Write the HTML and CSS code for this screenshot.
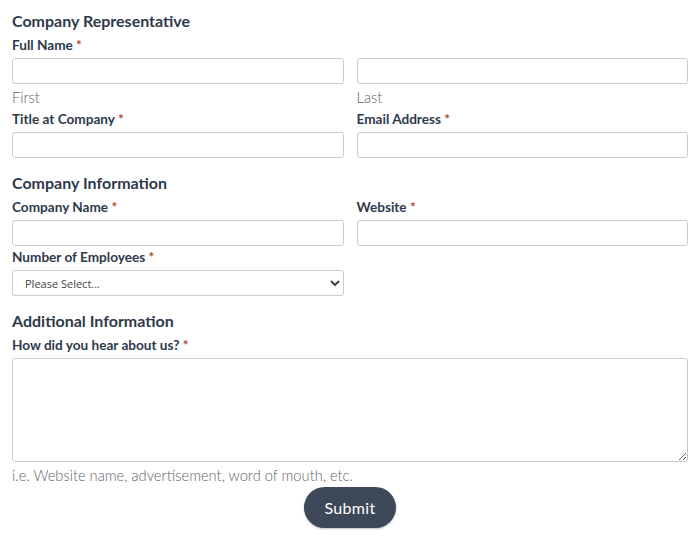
FILE: index.html
```html
<!DOCTYPE html>
<html lang="en">
<head>
  <meta charset="UTF-8">
  <meta name="viewport" content="width=device-width, initial-scale=1.0">
  <title>Contact Form</title>
  <link rel="stylesheet" href="styles.css">
</head>
<body>

  <form class="form">
    <h2>Company Representative</h2>
    <div class="field">
      <label>Full Name <span class="req">*</span></label>
      <div class="row">
        <div class="cell">
          <input type="text">
          <p class="hint">First</p>
        </div>
        <div class="cell">
          <input type="text">
          <p class="hint">Last</p>
        </div>
      </div>
    </div>
    <div class="row">
      <div class="field">
        <label>Title at Company <span class="req">*</span></label>
        <input type="text">
      </div>
      <div class="field">
        <label>Email Address <span class="req">*</span></label>
        <input type="email">
      </div>
    </div>

    <h2>Company Information</h2>
    <div class="row">
      <div class="field">
        <label>Company Name <span class="req">*</span></label>
        <input type="text">
      </div>
      <div class="field">
        <label>Website <span class="req">*</span></label>
        <input type="text">
      </div>
    </div>
    <div class="row">
      <div class="field">
        <label>Number of Employees <span class="req">*</span></label>
        <select>
          <option>Please Select...</option>
          <option>1-10</option>
          <option>11-50</option>
          <option>51-200</option>
          <option>200+</option>
        </select>
      </div>
    </div>

    <h2>Additional Information</h2>
    <div class="field">
      <label>How did you hear about us? <span class="req">*</span></label>
      <textarea></textarea>
      <p class="hint">i.e. Website name, advertisement, word of mouth, etc.</p>
    </div>

    <div class="actions">
      <button type="submit">Submit</button>
    </div>
  </form>

</body>
</html>
```

FILE: styles.css
```css
* {
  margin: 0;
  padding: 0;
  box-sizing: border-box;
}

body {
  font-family: Lato, "Open Sans", sans-serif;
  background-color: #ffffff;
  color: #2e3a4b;
  padding: 11px 12px;
}

h2 {
  font-size: 16px;
  font-weight: 700;
  line-height: 20px;
  margin-bottom: 5px;
}

.form h2:not(:first-child) {
  margin-top: 15px;
}

.row {
  display: grid;
  grid-template-columns: 1fr 1fr;
  column-gap: 13px;
}

.row + .row {
  margin-top: 2px;
}

.field + .row {
  margin-top: 3px;
}

label {
  display: block;
  font-size: 13.6px;
  font-weight: 700;
  line-height: 18px;
  margin-bottom: 4px;
}

.req {
  color: #b5473a;
}

input,
select,
textarea {
  display: block;
  width: 100%;
  height: 26px;
  border: 1px solid #c9cbce;
  border-radius: 3px;
  background-color: #ffffff;
  font-family: "Open Sans", sans-serif;
  color: #444;
}

select {
  font-size: 11px;
  padding-left: 8px;
}

textarea {
  height: 104px;
  resize: vertical;
}

.hint {
  font-size: 14.7px;
  font-weight: 300;
  line-height: 20px;
  margin-top: 3px;
  color: #636369;
}

.actions {
  display: flex;
  justify-content: center;
  margin-top: 2px;
}

button {
  font-family: Lato, sans-serif;
  font-size: 16px;
  letter-spacing: 0.3px;
  color: #ffffff;
  background-color: #3d4859;
  border: none;
  border-radius: 21px;
  width: 92px;
  height: 41px;
  box-shadow: 0 1px 2px rgba(0, 0, 0, 0.25);
}
```
